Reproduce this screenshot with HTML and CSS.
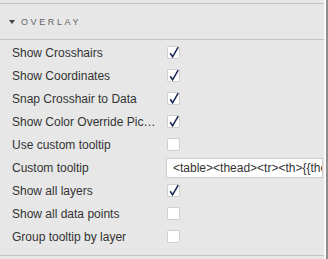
FILE: index.html
```html
<!DOCTYPE html>
<html lang="en">
<head>
    <meta charset="UTF-8">
    <title>Overlay settings</title>
    <link rel="stylesheet" href="styles.css">
</head>
<body>
    <div class="page">
        <div class="panel">
            <div class="section">
                <div class="section-header">
                    <span class="caret"></span>
                    <span class="section-title">Overlay</span>
                </div>
                <div class="rows">
                    <label class="label">Show Crosshairs</label>
                    <span class="check on"><svg viewBox="0 0 13 13"><path d="M3.2 7.2 L5.6 10.8 L11.2 1.2"/></svg></span>

                    <label class="label">Show Coordinates</label>
                    <span class="check on"><svg viewBox="0 0 13 13"><path d="M3.2 7.2 L5.6 10.8 L11.2 1.2"/></svg></span>

                    <label class="label">Snap Crosshair to Data</label>
                    <span class="check on"><svg viewBox="0 0 13 13"><path d="M3.2 7.2 L5.6 10.8 L11.2 1.2"/></svg></span>

                    <label class="label" title="Show Color Override Picker">Show Color Override Picker</label>
                    <span class="check on"><svg viewBox="0 0 13 13"><path d="M3.2 7.2 L5.6 10.8 L11.2 1.2"/></svg></span>

                    <label class="label">Use custom tooltip</label>
                    <span class="check"></span>

                    <label class="label">Custom tooltip</label>
                    <input class="text-input" type="text" value="<table><thead><tr><th>{{thead}}</th></tr></thead></table>">

                    <label class="label">Show all layers</label>
                    <span class="check on"><svg viewBox="0 0 13 13"><path d="M3.2 7.2 L5.6 10.8 L11.2 1.2"/></svg></span>

                    <label class="label">Show all data points</label>
                    <span class="check"></span>

                    <label class="label">Group tooltip by layer</label>
                    <span class="check"></span>
                </div>
            </div>
        </div>
        <div class="scrollbar"></div>
    </div>
</body>
</html>
```

FILE: styles.css
```css
html, body { margin: 0; padding: 0; background: #fafafa; }
body { font-family: Arial, "Liberation Sans", sans-serif; font-size: 12px; color: #333; }
.page { display: flex; height: 259px; }
.panel { width: 324px; background: #e7e7e7; padding-top: 3px; box-sizing: border-box; }
.scrollbar { width: 2px; margin-left: 2px; background: #8d8d8d; }
.section { border-top: 1px solid #c4c4c4; border-bottom: 1px solid #c4c4c4; }
.section-header { height: 36px; display: flex; align-items: center; padding-left: 9px; border-bottom: 1px solid #c4c4c4; box-sizing: border-box; }
.caret { width: 0; height: 0; border-left: 3px solid transparent; border-right: 3px solid transparent; border-top: 4px solid #444; margin-right: 6px; margin-top: 1px; }
.section-title { font-size: 9px; text-transform: uppercase; letter-spacing: 2.6px; color: #666; }
.rows { display: grid; grid-template-columns: 155px 1fr; grid-auto-rows: 23px; align-items: center; padding: 1px 1px 7px 12px; }
.label { white-space: nowrap; overflow: hidden; text-overflow: ellipsis; margin-right: 10px; }
.check { width: 13px; height: 13px; box-sizing: border-box; background: #fff; border: 1px solid #cfcfcf; border-radius: 2px; margin-top: -1px; }
.check svg { display: block; width: 13px; height: 13px; margin: -1px 0 0 -1px; fill: none; stroke: #1d2b57; stroke-width: 1.6; }
.text-input { width: 157px; height: 20px; box-sizing: border-box; margin: 0 0 0 -1px; border: 1px solid #cdcdcd; background: #fff; font-family: Arial, "Liberation Sans", sans-serif; font-size: 12px; color: #333; padding: 0 0 0 6px; outline: none; }
```
